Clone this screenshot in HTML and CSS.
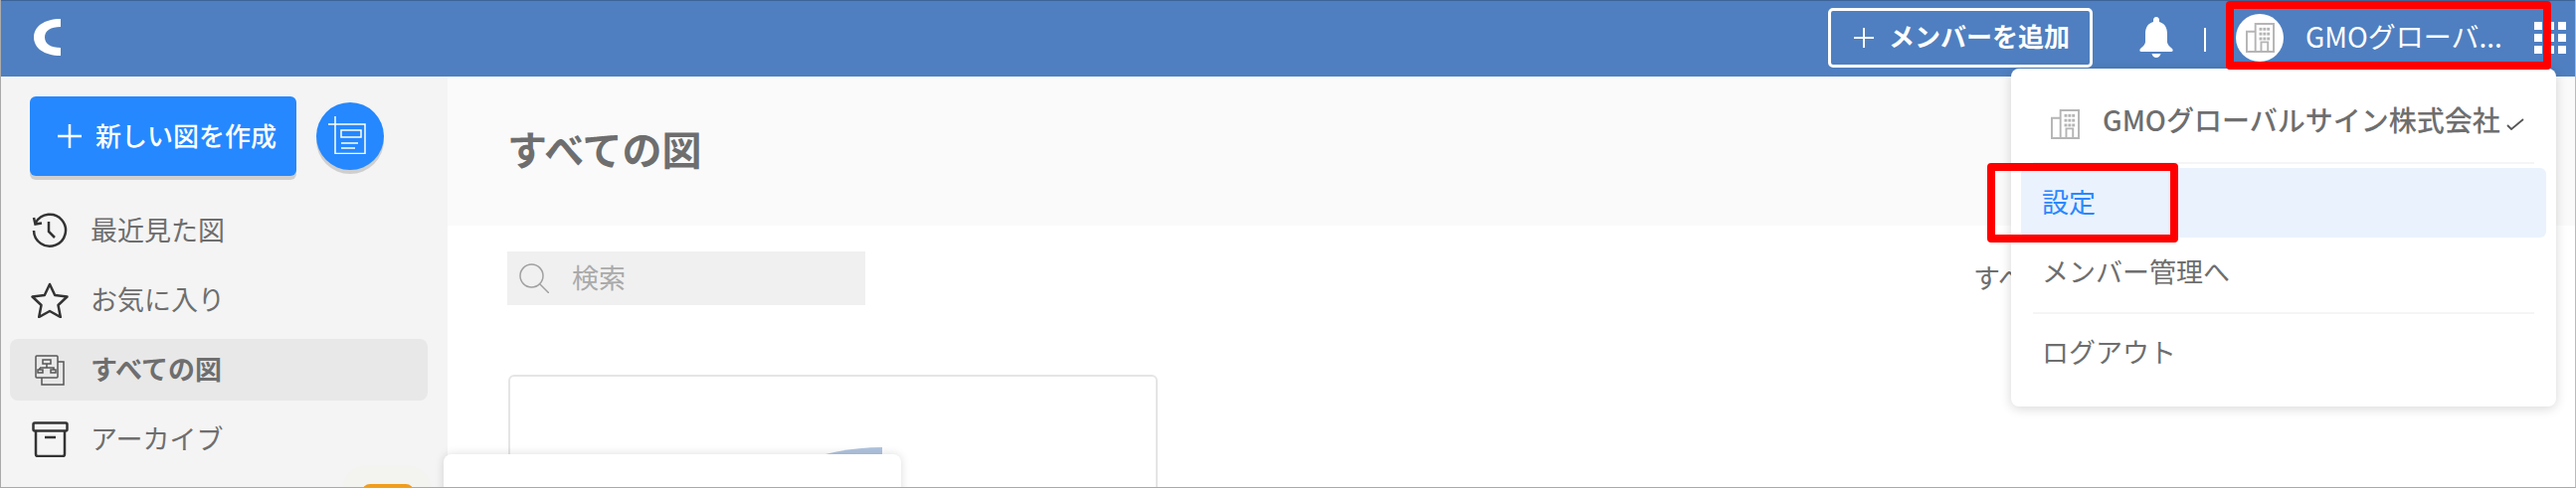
FILE: index.html
```html
<!DOCTYPE html>
<html lang="ja">
<head>
    <meta charset="UTF-8">
    <meta name="viewport" content="width=device-width, initial-scale=1.0">
    <title>すべての図</title>
    <link rel="stylesheet" href="styles.css">
</head>
<body>

<svg class="defs" width="0" height="0">
    <symbol id="building" viewBox="0 0 30 31">
        <g fill="none" stroke="currentColor" stroke-width="2">
            <path d="M10 9H1V30H10"/>
            <path d="M10 30V1H29V30Z"/>
            <path d="M16 30V20H23V30"/>
        </g>
        <g fill="currentColor">
            <rect x="14" y="5" width="3" height="3"/><rect x="18" y="5" width="3" height="3"/><rect x="22" y="5" width="3" height="3"/>
            <rect x="14" y="10" width="3" height="3"/><rect x="18" y="10" width="3" height="3"/><rect x="22" y="10" width="3" height="3"/>
            <rect x="14" y="15" width="3" height="3"/><rect x="18" y="15" width="3" height="3"/><rect x="22" y="15" width="3" height="3"/>
        </g>
    </symbol>
</svg>

<div class="frame">
    <header class="topbar">
        <svg class="logo" viewBox="0 0 27 37" width="27" height="37">
            <path fill="#fff" d="M27 0C10 0 0 8 0 18.500C0 29 10 37 27 37V29C17 29 11 25 11 18.500C11 12 17 8 27 8Z"/>
        </svg>
        <button class="add-member">
            <svg viewBox="0 0 20 20" width="20" height="20"><path d="M10 0V20M0 10H20" stroke="#fff" stroke-width="2"/></svg>
            メンバーを追加
        </button>
        <svg class="bell" viewBox="0 0 34 41" width="34" height="41">
            <path fill="#fff" d="M17 0C15 0 14 1.500 14 3.500V5C8.500 6.500 6 11 6 17V25C6 28 3 30 1 32C0 33 0 35 2 35H32C34 35 34 33 33 32C31 30 28 28 28 25V17C28 11 25.500 6.500 20 5V3.500C20 1.500 19 0 17 0ZM12.500 37C13 39.500 15 41 17 41C19 41 21 39.500 21.500 37Z"/>
        </svg>
        <span class="top-divider"></span>
        <span class="avatar avatar-top"><svg width="29" height="30"><use href="#building"/></svg></span>
        <span class="account-name">GMOグローバ...</span>
        <div class="apps">
            <i></i><i></i><i></i><i></i><i></i><i></i><i></i><i></i><i></i>
        </div>
    </header>

    <div class="body-row">
        <aside class="sidebar">
            <div class="create-row">
                <button class="create-btn">
                    <svg viewBox="0 0 24 24" width="24" height="24"><path d="M12 0V24M0 12H24" stroke="#fff" stroke-width="2.500"/></svg>
                    <span class="btn-label">新しい図を作成</span>
                </button>
                <button class="create-round">
                    <svg viewBox="0 0 38 38" width="38" height="38" fill="none" stroke="#fff" stroke-width="1.500">
                        <path d="M7 0V37.500H37V8H0"/>
                        <path d="M13 14H33V21H13ZM13 27H30M13 32H27"/>
                    </svg>
                </button>
            </div>
            <nav class="nav">
                <a class="nav-item">
                    <span class="nav-icon">
                        <svg viewBox="0 0 36 36" width="36" height="36" fill="none" stroke="#333" stroke-width="2.500">
                            <path d="M4 10A16 16 0 1 1 2 18"/>
                            <path d="M2 5L3.500 11.500L10 10.500"/>
                            <path d="M17 9V19L23 25"/>
                        </svg>
                    </span>
                    <span class="nav-label">最近見た図</span>
                </a>
                <a class="nav-item">
                    <span class="nav-icon">
                        <svg viewBox="0 0 38 36" width="38" height="36" fill="none" stroke="#333" stroke-width="2.500" stroke-linejoin="round">
                            <path d="M19 2L24.200 13L36.500 14.500L27.500 23L29.800 35L19 29L8.200 35L10.500 23L1.500 14.500L13.800 13Z"/>
                        </svg>
                    </span>
                    <span class="nav-label">お気に入り</span>
                </a>
                <a class="nav-item active">
                    <span class="nav-icon">
                        <svg viewBox="0 0 30 31" width="30" height="31" fill="none" stroke="#555" stroke-width="1.500">
                            <rect x="1" y="1" width="22" height="22" rx="1"/>
                            <path d="M23 7H29V30H7V23"/>
                            <path d="M8 5H16V9H8ZM12 9V13M5 13H19V15M5 13V15M3 15H8V18H3ZM16 15H21V18H16Z"/>
                        </svg>
                    </span>
                    <span class="nav-label">すべての図</span>
                </a>
                <a class="nav-item">
                    <span class="nav-icon">
                        <svg viewBox="0 0 37 36" width="37" height="36" fill="none" stroke="#333" stroke-width="2.500" stroke-linejoin="round">
                            <rect x="1.500" y="1.500" width="34" height="8" rx="1.500"/>
                            <path d="M4 9.500V33A2 2 0 0 0 6 35H31A2 2 0 0 0 33 33V9.500"/>
                            <path d="M13 16H24"/>
                        </svg>
                    </span>
                    <span class="nav-label">アーカイブ</span>
                </a>
            </nav>
        </aside>

        <main class="main">
            <div class="title-band">
                <h1>すべての図</h1>
            </div>
            <div class="tools">
                <div class="search">
                    <svg viewBox="0 0 30 30" width="30" height="30" fill="none" stroke="#a0a0a0" stroke-width="1.500">
                        <circle cx="12.500" cy="12.500" r="11.500"/>
                        <path d="M21 21L30 30"/>
                    </svg>
                    <span>検索</span>
                </div>
                <span class="filter">すべての図</span>
            </div>
            <div class="card">
                <div class="thumb"></div>
            </div>
        </main>
    </div>

    <div class="notice-bubble"><span class="notice-badge"></span></div>
    <div class="bottom-panel"></div>

    <div class="menu">
        <div class="menu-head">
            <span class="avatar avatar-menu"><svg width="29" height="30"><use href="#building"/></svg></span>
            <span class="menu-company">GMOグローバルサイン株式会社</span>
            <svg class="check" viewBox="0 0 18 12" width="18" height="12"><path d="M1 7L5 11L17 1" fill="none" stroke="#555" stroke-width="1.800"/></svg>
        </div>
        <div class="menu-line"></div>
        <div class="menu-item selected">設定</div>
        <div class="menu-item">メンバー管理へ</div>
        <div class="menu-line line-gap"></div>
        <div class="menu-item">ログアウト</div>
    </div>

    <!-- red marks from the manual -->
    <div class="mark mark-account"></div>
    <div class="mark mark-settings"></div>
</div>

</body>
</html>
```

FILE: styles.css
```css
* {
    box-sizing: border-box;
}

body {
    margin: 0;
    background-color: #fff;
    font-family: "Noto Sans CJK JP", "Noto Sans", sans-serif;
    color: #6e6e6e;
}

.defs {
    position: absolute;
}

.frame {
    position: relative;
    width: 2590px;
    height: 491px;
    overflow: hidden;
    border-left: 1px solid #aaa;
    border-right: 1px solid #bbb;
    border-bottom: 1px solid #aaa;
}

/* top bar */
.topbar {
    display: flex;
    align-items: center;
    height: 77px;
    padding: 0 9px 3px 33px;
    background-color: #4f7fc0;
    border-top: 1px solid #3d6499;
}

.logo {
    margin-right: auto;
}

.add-member {
    display: flex;
    align-items: center;
    gap: 15px;
    width: 266px;
    height: 60px;
    padding: 0 0 4px 23px;
    background: none;
    border: 3px solid #fff;
    border-radius: 5px;
    color: #fff;
    font-family: inherit;
    font-size: 26px;
    font-weight: 700;
}

.add-member svg {
    margin-top: 4px;
}

.bell {
    margin-left: 47px;
}

.top-divider {
    width: 2px;
    height: 24px;
    margin: 4px 0 0 31px;
    background-color: #fff;
}

.avatar {
    display: flex;
    align-items: center;
    justify-content: center;
    flex: none;
    border-radius: 50%;
    background-color: #fff;
    color: #b5b5b5;
}

.avatar-top {
    width: 48px;
    height: 48px;
    margin-left: 30px;
}

.avatar-menu {
    width: 46px;
    height: 46px;
}

.account-name {
    width: 230px;
    margin-left: 22px;
    padding-bottom: 4px;
    color: #fff;
    font-size: 28px;
    white-space: nowrap;
}

.apps {
    display: grid;
    grid-template-columns: repeat(3, 8px);
    grid-auto-rows: 8px;
    gap: 4px;
}

.apps i {
    background-color: #fff;
}

/* sidebar */
.body-row {
    display: flex;
    height: 413px;
}

.sidebar {
    width: 449px;
    flex: none;
    padding-top: 20px;
    background-color: #f4f4f4;
}

.create-row {
    display: flex;
    align-items: center;
    gap: 20px;
    margin-left: 29px;
}

.create-btn {
    display: flex;
    align-items: center;
    gap: 14px;
    width: 268px;
    height: 80px;
    padding: 0 0 0 28px;
    background-color: #2588ff;
    border: none;
    border-radius: 6px;
    box-shadow: 0 4px 0 #cfcfcf;
    color: #fff;
    font-family: inherit;
    font-size: 26px;
    font-weight: 500;
}

.btn-label {
    padding-bottom: 3px;
}

.create-round {
    display: flex;
    align-items: center;
    justify-content: center;
    width: 68px;
    height: 68px;
    padding: 0 6px 2px 0;
    background-color: #2588ff;
    border: none;
    border-radius: 50%;
    box-shadow: 0 4px 0 #cfcfcf;
}

.nav {
    margin: 24px 0 0 9px;
}

.nav-item {
    display: flex;
    align-items: center;
    width: 420px;
    height: 62px;
    margin-bottom: 8px;
    padding-left: 20px;
    border-radius: 8px;
    font-size: 27px;
}

.nav-label {
    padding-bottom: 3px;
}

.nav-item.active {
    background-color: #e8e8e8;
    font-weight: 700;
}

.nav-icon {
    display: flex;
    align-items: center;
    justify-content: center;
    width: 40px;
    margin-right: 21px;
}

/* main */
.main {
    flex: 1;
    overflow: hidden;
}

.title-band {
    display: flex;
    align-items: center;
    height: 150px;
    padding: 0 0 6px 60px;
    background-color: #fafafa;
}

.title-band h1 {
    margin: 0;
    font-size: 40px;
    font-weight: 700;
}

.tools {
    display: flex;
    align-items: center;
    margin-top: 26px;
    padding-left: 60px;
}

.search {
    display: flex;
    align-items: center;
    gap: 23px;
    width: 360px;
    height: 54px;
    padding-left: 12px;
    background-color: #f0f0f0;
    color: #aaa;
    font-size: 27px;
}

.search span {
    padding-bottom: 3px;
}

.filter {
    margin-left: 1114px;
    padding-bottom: 3px;
    font-size: 27px;
    white-space: nowrap;
}

.card {
    width: 653px;
    height: 300px;
    margin: 70px 0 0 61px;
    padding: 71px 0 0 139px;
    border: 2px solid #e5e5e5;
    border-radius: 6px;
}

.thumb {
    width: 235px;
    height: 235px;
    background-color: #b0c4df;
    border-top-left-radius: 235px;
}

/* things lying over the page */
.notice-bubble {
    position: absolute;
    left: 344px;
    top: 468px;
    width: 88px;
    height: 60px;
    padding: 19px 0 0 19px;
    background-color: #f3f3f0;
    border-radius: 24px;
}

.notice-badge {
    display: block;
    width: 52px;
    height: 20px;
    background-color: #f19d1c;
    border-radius: 8px;
}

.bottom-panel {
    position: absolute;
    left: 445px;
    top: 457px;
    width: 460px;
    height: 60px;
    background-color: #fff;
    border-radius: 8px;
    box-shadow: 0 0 10px rgba(0, 0, 0, 0.14);
}

.menu {
    position: absolute;
    left: 2021px;
    top: 69px;
    width: 548px;
    height: 340px;
    padding-top: 33px;
    background-color: #fff;
    border-radius: 8px;
    box-shadow: 0 2px 12px rgba(0, 0, 0, 0.16);
}

.menu-head {
    display: flex;
    align-items: center;
    height: 46px;
    margin-bottom: 15px;
    padding-left: 31px;
}

.menu-company {
    margin-left: 15px;
    padding-bottom: 11px;
    font-size: 28px;
    font-weight: 500;
    white-space: nowrap;
}

.check {
    margin: 0 0 0 6px;
}

.menu-line {
    height: 2px;
    margin: 0 22px;
    background-color: #f5f5f5;
}

.line-gap {
    margin-top: 5px;
}

.menu-item {
    display: flex;
    align-items: center;
    height: 70px;
    margin: 4px 10px 0;
    padding: 0 0 4px 21px;
    border-radius: 6px;
    font-size: 27px;
}

.menu-item.selected {
    background-color: #eaf2fd;
    color: #2a88ff;
}

.menu-item.selected + .menu-item {
    margin-top: 0;
}

.mark {
    position: absolute;
    border: 8px solid #f00;
    border-radius: 4px;
}

.mark-account {
    left: 2237px;
    top: 1px;
    width: 327px;
    height: 69px;
}

.mark-settings {
    left: 1997px;
    top: 164px;
    width: 192px;
    height: 80px;
}
```
